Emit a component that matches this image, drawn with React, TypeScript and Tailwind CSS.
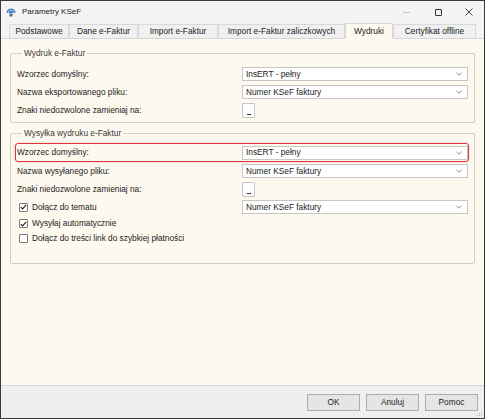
import React from 'react';

const TABS = [
  { label: 'Podstawowe', w: 'w-[60px]' },
  { label: 'Dane e-Faktur', w: 'w-[69px]' },
  { label: 'Import e-Faktur', w: 'w-[80px]' },
  { label: 'Import e-Faktur zaliczkowych', w: 'w-[127px]' },
  { label: 'Wydruki', w: 'w-[48px]', active: true },
  { label: 'Certyfikat offline', w: 'w-[83px]' },
];

// Small dropdown arrow used inside the combo boxes
const Chevron = () => (
  <svg width="6" height="4" viewBox="0 0 6 4" className="shrink-0">
    <path d="M0.5 0.8 L3 3.2 L5.5 0.8" fill="none" stroke="#7a7a7a" strokeWidth="0.9" />
  </svg>
);

const Select = ({ value }: { value: string }) => (
  <div className="flex-1 h-[14px] bg-white border border-[#c6c6c6] flex items-center justify-between pl-[3px] pr-[5px]">
    <span>{value}</span>
    <Chevron />
  </div>
);

const SmallButton = () => (
  <div className="w-[13px] h-[15px] bg-white border border-[#c6c6c6] rounded-[1px] flex items-end justify-center pb-[2px] leading-none">
    <span className="block w-[4px] h-px bg-[#333]" />
  </div>
);

const Row = ({ label, children }: { label: string; children: React.ReactNode }) => (
  <div className="h-[18px] flex items-center">
    <span className="w-[225px] shrink-0">{label}</span>
    {children}
  </div>
);

const Checkbox = ({ checked }: { checked?: boolean }) => (
  <div className="w-[9px] h-[9px] ml-[2px] mr-[4px] shrink-0 bg-white border border-[#7a7a7a] rounded-[1px] flex items-center justify-center">
    {checked && (
      <svg width="7" height="6" viewBox="0 0 7 6">
        <path d="M0.8 3.1 L2.6 4.9 L6.2 0.9" fill="none" stroke="#222" strokeWidth="1.1" />
      </svg>
    )}
  </div>
);

const Legend = ({ children }: { children: React.ReactNode }) => (
  <legend className="ml-[5px] px-[2px] leading-[11px] text-[#3a3a3a]">{children}</legend>
);

const DialogButton = ({ label }: { label: string }) => (
  <button className="w-[53px] h-[17px] bg-[#e5e5e5] border border-[#adadad] text-[#1b1b1b] leading-none">
    {label}
  </button>
);

export default function App() {
  return (
    <div className="relative w-[485px] h-[419px] flex flex-col overflow-hidden border border-[#3b3b3b] bg-[#f4f4f4] text-[8.3px] text-[#222] font-['Liberation_Sans',Arial,sans-serif]">
      {/* Title bar */}
      <div className="h-[22px] flex items-center pl-[5px] shrink-0">
        <svg width="10" height="9" viewBox="0 0 10 9" className="mr-[6px]">
          <path d="M0.5 5 A4.5 4.5 0 0 1 9.5 5 Z" fill="#3f7fbf" />
          <path d="M2.2 5 A2.8 2.8 0 0 1 7.8 5" fill="none" stroke="#a9cdee" strokeWidth="0.9" />
          <rect x="3.5" y="5.5" width="3" height="3" fill="#5a6e80" />
        </svg>
        <span className="text-[8px]">Parametry KSeF</span>
        <div className="ml-auto flex items-center h-full">
          <div className="w-[32px] flex justify-center">
            <span className="block w-[7px] h-px bg-[#c4c4c4]" />
          </div>
          <div className="w-[32px] flex justify-center">
            <span className="block w-[7px] h-[7px] border border-[#333] rounded-[1px]" />
          </div>
          <div className="w-[30px] flex justify-center">
            <svg width="8" height="8" viewBox="0 0 8 8">
              <path d="M0.5 0.5 L7.5 7.5 M7.5 0.5 L0.5 7.5" stroke="#333" strokeWidth="0.9" />
            </svg>
          </div>
        </div>
      </div>

      {/* Tabs */}
      <div className="h-[16px] shrink-0 flex items-end pl-[8px] border-b border-[#d6d6d6]">
        {TABS.map((t) => (
          <div
            key={t.label}
            className={`${t.w} h-[15px] -mb-px flex items-center justify-center border-l border-t border-r ${
              t.active
                ? 'bg-[#fdf9ef] border-[#d6d6d6] border-b border-b-[#fdf9ef] h-[16px]'
                : 'bg-[#f0f0f0] border-[#d9d9d9] border-b border-b-[#d6d6d6]'
            }`}
          >
            {t.label}
          </div>
        ))}
      </div>

      {/* Page content */}
      <div className="flex-1 bg-[#fdf9ef] px-[9px] pt-[9px]">
        <fieldset className="border border-[#d2cec6] rounded-[2px] pl-[6px] pr-[6px] pt-[6px] pb-[3px]">
          <Legend>Wydruk e-Faktur</Legend>
          <Row label="Wzorzec domyślny:">
            <Select value="InsERT - pełny" />
          </Row>
          <Row label="Nazwa eksportowanego pliku:">
            <Select value="Numer KSeF faktury" />
          </Row>
          <Row label="Znaki niedozwolone zamieniaj na:">
            <SmallButton />
          </Row>
        </fieldset>

        <fieldset className="mt-[5px] border border-[#d2cec6] rounded-[2px] pl-[6px] pr-[6px] pt-[4px] pb-[17px]">
          <Legend>Wysyłka wydruku e-Faktur</Legend>
          <div className="h-[19px] -ml-[2px] -mr-[1px] flex items-center border border-[#e0363a] rounded-[3px] pl-px shadow-[0_0_2px_rgba(224,54,58,0.35)]">
            <span className="w-[225px] shrink-0">Wzorzec domyślny:</span>
            <Select value="InsERT - pełny" />
          </div>
          <Row label="Nazwa wysyłanego pliku:">
            <Select value="Numer KSeF faktury" />
          </Row>
          <Row label="Znaki niedozwolone zamieniaj na:">
            <SmallButton />
          </Row>
          <div className="h-[18px] flex items-center">
            <div className="w-[225px] shrink-0 flex items-center">
              <Checkbox checked />
              <span>Dołącz do tematu</span>
            </div>
            <Select value="Numer KSeF faktury" />
          </div>
          <div className="h-[15px] flex items-center">
            <Checkbox checked />
            <span>Wysyłaj automatycznie</span>
          </div>
          <div className="h-[15px] flex items-center">
            <Checkbox />
            <span>Dołącz do treści link do szybkiej płatności</span>
          </div>
        </fieldset>
      </div>

      {/* Footer buttons */}
      <div className="h-[33px] shrink-0 border-t border-[#d6d6d6] bg-[#efefef] flex items-center justify-end gap-[6px] pr-[6px]">
        <DialogButton label="OK" />
        <DialogButton label="Anuluj" />
        <DialogButton label="Pomoc" />
      </div>

      {/* Resize grip */}
      <svg width="7" height="7" viewBox="0 0 7 7" className="absolute right-[1px] bottom-[1px]">
        <rect x="5" y="1" width="1" height="1" fill="#b5b5b5" />
        <rect x="3" y="3" width="1" height="1" fill="#b5b5b5" />
        <rect x="5" y="3" width="1" height="1" fill="#b5b5b5" />
        <rect x="1" y="5" width="1" height="1" fill="#b5b5b5" />
        <rect x="3" y="5" width="1" height="1" fill="#b5b5b5" />
        <rect x="5" y="5" width="1" height="1" fill="#b5b5b5" />
      </svg>
    </div>
  );
}
